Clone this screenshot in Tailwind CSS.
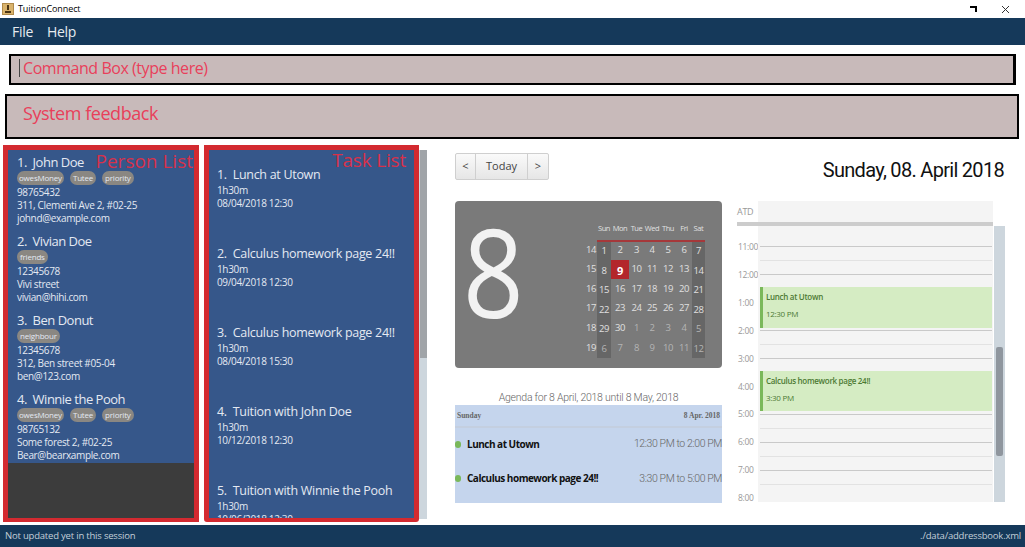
<!DOCTYPE html>
<html lang="en">
<head>
<meta charset="UTF-8" />
<title>TuitionConnect</title>
<script src="https://cdn.jsdelivr.net/npm/@tailwindcss/browser@4"></script>
</head>
<body class="w-[1025px] h-[547px] overflow-hidden bg-white font-['Open_Sans',sans-serif] flex flex-col">
  <!-- title bar -->
  <div class="h-[18px] flex items-center pl-[2px] pr-[15px] text-[9px] tracking-[-0.1px] text-black">
    <svg width="12" height="12" viewBox="0 0 12 12" class="mr-[4px]"><rect width="12" height="12" fill="#b08a4a"/><rect x="1" y="1" width="10" height="10" fill="#d9b36c"/><path d="M6 2v5M3 9h6" stroke="#4a3413" stroke-width="2"/></svg>
    <span>TuitionConnect</span>
    <svg width="7" height="7" viewBox="0 0 7 7" class="ml-auto mr-[24px]"><path d="M0 1h6v5" fill="none" stroke="#000" stroke-width="2"/></svg>
    <svg width="9" height="9" viewBox="0 0 9 9"><path d="M1 1l7 7M8 1l-7 7" stroke="#333" stroke-width="1"/></svg>
  </div>

  <!-- menu -->
  <div class="h-[27px] bg-[#15395a] flex items-center gap-[14px] pl-[12px] text-[14px] tracking-[-0.3px] text-[#e6ebf0]">
    <span>File</span><span>Help</span>
  </div>

  <!-- command box -->
  <div class="mt-[9px] ml-[9px] w-[1007px] h-[31px] bg-[#c8baba] border-2 border-black border-r-[3px] flex items-center pl-[8px] pb-[3px] text-[16px] leading-none tracking-[-0.45px] font-medium text-[#e8405a]">
    <span class="w-px h-[18px] bg-[#444] mr-[3px]"></span><span>Command Box (type here)</span>
  </div>

  <!-- feedback -->
  <div class="mt-[9px] ml-[5px] w-[1014px] h-[45px] bg-[#c8baba] border-2 border-black flex items-center pl-[16px] pb-[6px] text-[18px] tracking-[-0.45px] font-medium text-[#e8405a]">
    System feedback
  </div>

  <div class="flex-1 flex mt-[6px] min-h-0">
    <!-- left: lists -->
    <div class="w-[427px] shrink-0 flex pl-[3px] pb-[3px]">
      <!-- person list -->
      <div class="relative w-[196px] h-[377px] border-[5px] border-b-4 border-[#d32a30] bg-[#3c3c3c] flex flex-col">
        <div class="h-[313px] overflow-hidden bg-[#36578a] pl-[9px] text-[#e4e9f2] text-[10px] leading-[13px] tracking-[-0.35px]">
          <div class="h-[79px] pt-[4px]">
            <p class="text-[13px] leading-[16px] mb-[1px] tracking-[-0.5px]">1.&nbsp; John Doe</p>
            <div class="flex gap-[6px] mb-[1px] tracking-[-0.2px]">
              <span class="h-[14px] leading-[14px] px-[2px] rounded-[7px] bg-[#8a8782] text-[8px]">owesMoney</span>
              <span class="h-[14px] leading-[14px] px-[3px] rounded-[7px] bg-[#8a8782] text-[8px]">Tutee</span>
              <span class="h-[14px] leading-[14px] px-[3px] rounded-[7px] bg-[#8a8782] text-[8px]">priority</span>
            </div>
            <p>98765432</p><p class="whitespace-nowrap">311, Clementi Ave 2, #02-25</p><p>johnd@example.com</p>
          </div>
          <div class="h-[79px] pt-[4px]">
            <p class="text-[13px] leading-[16px] mb-[1px] tracking-[-0.5px]">2.&nbsp; Vivian Doe</p>
            <div class="flex gap-[6px] mb-[1px] tracking-[-0.2px]">
              <span class="h-[14px] leading-[14px] px-[3px] rounded-[7px] bg-[#8a8782] text-[8px]">friends</span>
            </div>
            <p>12345678</p><p>Vivi street</p><p>vivian@hihi.com</p>
          </div>
          <div class="h-[79px] pt-[4px]">
            <p class="text-[13px] leading-[16px] mb-[1px] tracking-[-0.5px]">3.&nbsp; Ben Donut</p>
            <div class="flex gap-[6px] mb-[1px] tracking-[-0.2px]">
              <span class="h-[14px] leading-[14px] px-[3px] rounded-[7px] bg-[#8a8782] text-[8px]">neighbour</span>
            </div>
            <p>12345678</p><p>312, Ben street #05-04</p><p>ben@123.com</p>
          </div>
          <div class="h-[79px] pt-[4px]">
            <p class="text-[13px] leading-[16px] mb-[1px] tracking-[-0.5px]">4.&nbsp; Winnie the Pooh</p>
            <div class="flex gap-[6px] mb-[1px] tracking-[-0.2px]">
              <span class="h-[14px] leading-[14px] px-[2px] rounded-[7px] bg-[#8a8782] text-[8px]">owesMoney</span>
              <span class="h-[14px] leading-[14px] px-[3px] rounded-[7px] bg-[#8a8782] text-[8px]">Tutee</span>
              <span class="h-[14px] leading-[14px] px-[3px] rounded-[7px] bg-[#8a8782] text-[8px]">priority</span>
            </div>
            <p>98765132</p><p>Some forest 2, #02-25</p><p>Bear@bearxample.com</p>
          </div>
        </div>
        <span class="absolute right-[1px] top-[-1px] text-[19px] leading-[24px] font-medium text-[#d8314a]">Person List</span>
      </div>

      <!-- task list -->
      <div class="relative ml-[5px] w-[215px] h-[377px] border-[5px] border-b-4 border-[#d32a30] rounded-b-[3px] bg-[#36578a] overflow-hidden pl-[8px] text-[#e4e9f2] text-[10px] leading-[13px] tracking-[-0.35px]">
        <div class="h-[79px] pt-[17px]"><p class="text-[12.5px] leading-[16px] mb-[1px] whitespace-nowrap tracking-[-0.3px]">1.&nbsp; Lunch at Utown</p><p>1h30m</p><p>08/04/2018 12:30</p></div>
        <div class="h-[79px] pt-[17px]"><p class="text-[12.5px] leading-[16px] mb-[1px] whitespace-nowrap tracking-[-0.3px]">2.&nbsp; Calculus homework page 24!!</p><p>1h30m</p><p>09/04/2018 12:30</p></div>
        <div class="h-[79px] pt-[17px]"><p class="text-[12.5px] leading-[16px] mb-[1px] whitespace-nowrap tracking-[-0.3px]">3.&nbsp; Calculus homework page 24!!</p><p>1h30m</p><p>08/04/2018 15:30</p></div>
        <div class="h-[79px] pt-[17px]"><p class="text-[12.5px] leading-[16px] mb-[1px] whitespace-nowrap tracking-[-0.3px]">4.&nbsp; Tuition with John Doe</p><p>1h30m</p><p>10/12/2018 12:30</p></div>
        <div class="h-[79px] pt-[17px]"><p class="text-[12.5px] leading-[16px] mb-[1px] whitespace-nowrap tracking-[-0.3px]">5.&nbsp; Tuition with Winnie the Pooh</p><p>1h30m</p><p>10/06/2018 12:30</p></div>
        <span class="absolute right-[8px] top-[-2px] text-[19px] leading-[24px] font-medium tracking-[-0.2px] text-[#d8314a]">Task List</span>
      </div>

      <!-- list scrollbar -->
      <div class="w-[8px] h-[369px] mt-[5px] bg-[#cdd6dd]">
        <div class="w-[7px] ml-[1px] h-[208px] bg-[#a0a4a8]"></div>
      </div>
    </div>

    <!-- right: calendar -->
    <div class="flex-1 pl-[28px] pr-[20px] pt-[8px] min-w-0">
      <div class="flex items-start h-[48px]">
        <div class="flex h-[27px] text-[11px] text-[#444] border border-[#cfcfcf] rounded-[2px] bg-linear-to-b from-[#fafafa] to-[#e6e6e6]">
          <span class="w-[20px] flex items-center justify-center border-r border-[#cfcfcf]">&lt;</span>
          <span class="w-[52px] flex items-center justify-center border-r border-[#cfcfcf]">Today</span>
          <span class="w-[20px] flex items-center justify-center">&gt;</span>
        </div>
        <span class="ml-auto mr-[1px] font-['Roboto',sans-serif] text-[20px] leading-[34px] text-[#111] tracking-[-0.7px]">Sunday, 08. April 2018</span>
      </div>

      <div class="flex">
        <!-- month + agenda -->
        <div class="w-[267px] shrink-0">
          <div class="h-[167px] bg-[#7a7a7a] rounded-[4px] flex">
            <div class="w-[130px] shrink-0 pl-[8px] text-[#f2f2f2] text-[122px] leading-[140px]"><span class="inline-block origin-left scale-x-[0.87]">8</span></div>
            <div class="text-[9.5px] tracking-[-0.4px] text-[#e0e0e0] text-center">
              <div class="grid grid-cols-[12px_14px_18px_15px_16px_16px_16px_13px] h-[39px] items-end pb-[7px] text-[7.5px] leading-[10px]">
                <span></span><span>Sun</span><span>Mon</span><span>Tue</span><span>Wed</span><span>Thu</span><span>Fri</span><span>Sat</span>
              </div>
              <div class="grid grid-cols-[12px_14px_18px_15px_16px_16px_16px_13px] grid-rows-[repeat(6,19.6px)] items-center">
                <span class="row-start-1 col-start-1">14</span><span class="row-start-1 col-start-2 self-stretch leading-[21px] bg-[#666]">1</span><span class="row-start-1 col-start-3">2</span><span class="row-start-1 col-start-4">3</span><span class="row-start-1 col-start-5">4</span><span class="row-start-1 col-start-6">5</span><span class="row-start-1 col-start-7">6</span><span class="row-start-1 col-start-8 self-stretch leading-[21px] bg-[#666]">7</span>
                <span>15</span><span class="self-stretch leading-[21px] bg-[#666]">8</span><span class="self-stretch leading-[21px] bg-[#b3272b] text-white font-bold text-[11px]">9</span><span>10</span><span>11</span><span>12</span><span>13</span><span class="self-stretch leading-[21px] bg-[#666]">14</span>
                <span>16</span><span class="self-stretch leading-[21px] bg-[#666]">15</span><span>16</span><span>17</span><span>18</span><span>19</span><span>20</span><span class="self-stretch leading-[21px] bg-[#666]">21</span>
                <span>17</span><span class="self-stretch leading-[21px] bg-[#666]">22</span><span>23</span><span>24</span><span>25</span><span>26</span><span>27</span><span class="self-stretch leading-[21px] bg-[#666]">28</span>
                <span>18</span><span class="self-stretch leading-[21px] bg-[#666]">29</span><span>30</span><span class="text-[#b5b5b5]">1</span><span class="text-[#b5b5b5]">2</span><span class="text-[#b5b5b5]">3</span><span class="text-[#b5b5b5]">4</span><span class="self-stretch leading-[21px] bg-[#666] text-[#b5b5b5]">5</span>
                <span>19</span><span class="self-stretch leading-[21px] bg-[#666] text-[#b5b5b5]">6</span><span class="text-[#b5b5b5]">7</span><span class="text-[#b5b5b5]">8</span><span class="text-[#b5b5b5]">9</span><span class="text-[#b5b5b5]">10</span><span class="text-[#b5b5b5]">11</span><span class="self-stretch leading-[21px] bg-[#666] text-[#b5b5b5]">12</span>
                <div class="relative z-10 row-start-1 col-start-2 col-span-7 self-start h-[2px] bg-[#a5383a]"></div>
              </div>
            </div>
          </div>

          <p class="mt-[22px] h-[15px] text-center font-['Roboto',sans-serif] font-light text-[10.5px] leading-[15px] text-[#666] tracking-[-0.25px]">Agenda for 8 April, 2018 until 8 May, 2018</p>
          <div class="h-[98px] bg-[#c5d5ed]">
            <div class="h-[23px] flex justify-between items-center px-[2px] border-b-2 border-[#c4cfe0] font-['Liberation_Serif',serif] font-bold text-[7.5px] text-[#666]">
              <span>Sunday</span><span>8 Apr. 2018</span>
            </div>
            <div class="h-[32px] flex items-center text-[10px]">
              <span class="w-[6px] h-[7px] rounded-full bg-[#7ab85a] mr-[6px]"></span>
              <span class="font-bold text-[#111] tracking-[-0.5px]">Lunch at Utown</span>
              <span class="ml-auto font-['Roboto',sans-serif] font-light text-[10.5px] tracking-[-0.4px] text-[#666]">12:30 PM to 2:00 PM</span>
            </div>
            <div class="h-[35px] mt-[1px] flex items-center text-[10px]">
              <span class="w-[6px] h-[7px] rounded-full bg-[#7ab85a] mr-[6px]"></span>
              <span class="font-bold text-[#111] tracking-[-0.5px]">Calculus homework page 24!!</span>
              <span class="ml-auto font-['Roboto',sans-serif] font-light text-[10.5px] tracking-[-0.4px] text-[#666]">3:30 PM to 5:00 PM</span>
            </div>
          </div>
        </div>

        <!-- day view -->
        <div class="ml-[15px] w-[268px] shrink-0 text-[8.5px] tracking-[-0.3px] text-[#999]">
          <div class="flex h-[21px]">
            <span class="w-[21px] pt-[4px] text-[9px] leading-[14px]">ATD</span>
            <div class="w-[235px] bg-[#f4f4f4]"></div>
          </div>
          <div class="w-[256px] h-[4px] bg-[#cccccc]"></div>
          <div class="flex h-[276px] overflow-hidden">
            <div class="w-[21px] shrink-0 pt-[7px] leading-[27.9px] whitespace-nowrap">
              <p class="pl-[1px]">11:00</p><p class="pl-[1px]">12:00</p><p class="pl-[1px]">1:00</p><p class="pl-[1px]">2:00</p><p class="pl-[1px]">3:00</p><p class="pl-[1px]">4:00</p><p class="pl-[1px]">5:00</p><p class="pl-[1px]">6:00</p><p class="pl-[1px]">7:00</p><p class="pl-[1px]">8:00</p>
            </div>
            <div class="relative w-[235px] shrink-0 bg-[#f4f4f4] pt-[20px] pl-[2px] pr-[1px]">
              <div class="h-[14px] border-t border-[#c9c9c9]"></div><div class="h-[14px] border-t border-[#e2e2e2]"></div>
              <div class="h-[14px] border-t border-[#c9c9c9]"></div><div class="h-[14px] border-t border-[#e2e2e2]"></div>
              <div class="h-[14px] border-t border-[#c9c9c9]"></div><div class="h-[14px] border-t border-[#e2e2e2]"></div>
              <div class="h-[14px] border-t border-[#c9c9c9]"></div><div class="h-[14px] border-t border-[#e2e2e2]"></div>
              <div class="h-[14px] border-t border-[#c9c9c9]"></div><div class="h-[14px] border-t border-[#e2e2e2]"></div>
              <div class="h-[14px] border-t border-[#c9c9c9]"></div><div class="h-[14px] border-t border-[#e2e2e2]"></div>
              <div class="h-[14px] border-t border-[#c9c9c9]"></div><div class="h-[14px] border-t border-[#e2e2e2]"></div>
              <div class="h-[14px] border-t border-[#c9c9c9]"></div><div class="h-[14px] border-t border-[#e2e2e2]"></div>
              <div class="h-[14px] border-t border-[#c9c9c9]"></div><div class="h-[14px] border-t border-[#e2e2e2]"></div>
              <div class="absolute left-[2px] right-[1px] top-[61px] h-[41px] bg-[#d5ecc3] border-l-[3px] border-[#7ab85a] pl-[3px] text-[8px] text-[#4d7a33] leading-[17px] pt-[1px]">
                <p class="font-semibold">Lunch at Utown</p><p>12:30 PM</p>
              </div>
              <div class="absolute left-[2px] right-[1px] top-[145px] h-[40px] bg-[#d5ecc3] border-l-[3px] border-[#7ab85a] pl-[3px] text-[8px] text-[#4d7a33] leading-[17px] pt-[1px]">
                <p class="font-semibold whitespace-nowrap">Calculus homework page 24!!</p><p>3:30 PM</p>
              </div>
            </div>
            <div class="w-[11px] h-[276px] ml-[1px] bg-[#cdd6dd] pt-[121px] pl-[2px]">
              <div class="w-[7px] h-[109px] rounded-[2px] bg-[#8f969e]"></div>
            </div>
          </div>
        </div>
      </div>
    </div>
  </div>

  <!-- status bar -->
  <div class="h-[22px] bg-[#15395a] flex items-center justify-between pl-[5px] pr-[4px] text-[9.5px] tracking-[-0.2px] text-[#c4cfd9]">
    <span>Not updated yet in this session</span><span>./data/addressbook.xml</span>
  </div>
</body>
</html>
